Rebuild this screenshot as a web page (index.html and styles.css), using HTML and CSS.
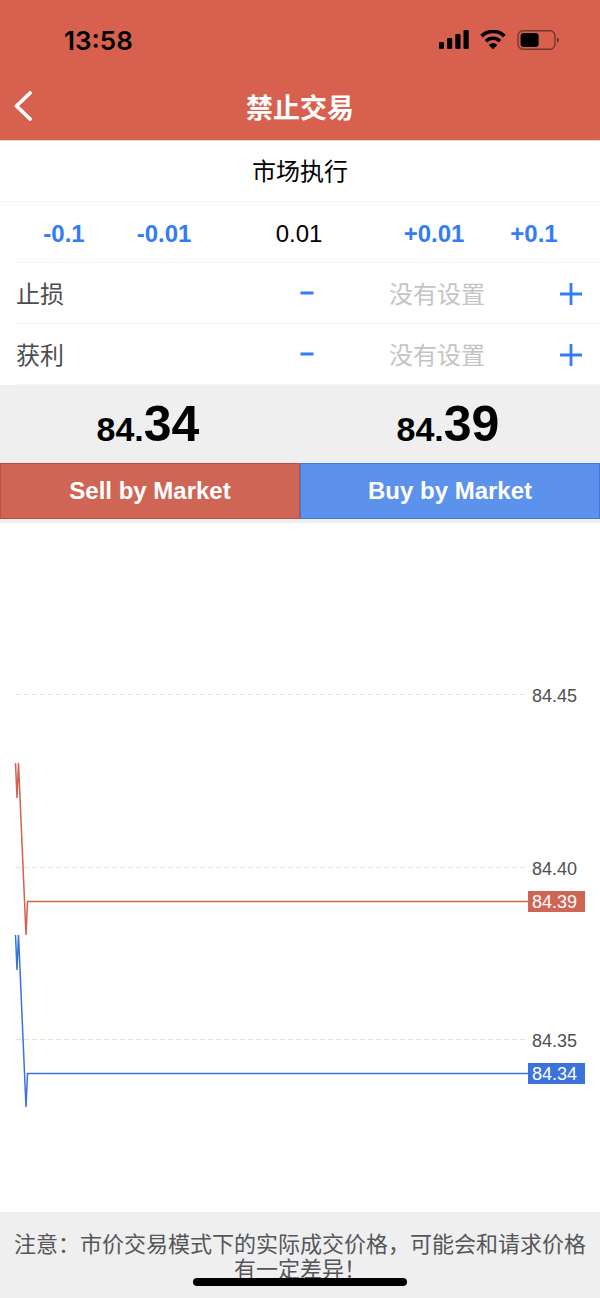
FILE: index.html
```html
<!DOCTYPE html>
<html lang="zh-CN">
<head>
  <meta charset="UTF-8">
  <meta name="viewport" content="width=device-width, initial-scale=1.0">
  <title>禁止交易</title>
  <link rel="stylesheet" href="styles.css">
</head>
<body>

  <header class="header">
    <div class="status">
      <span class="time">13:58</span>
      <div class="status-icons">
        <svg width="30" height="20" viewBox="0 0 30 20">
          <rect x="0" y="12" width="5" height="7" rx="1.3" />
          <rect x="8" y="8" width="5.2" height="11" rx="1.3" />
          <rect x="16.3" y="4" width="5.2" height="15" rx="1.3" />
          <rect x="24.5" y="0" width="5.2" height="19" rx="1.3" />
        </svg>
        <svg width="26" height="20" viewBox="0 0 26 20">
          <path d="M1.6 6.2 A16 16 0 0 1 24.4 6.2" fill="none" stroke="#000" stroke-width="3.8" />
          <path d="M6 11.2 A9.8 9.8 0 0 1 20 11.2" fill="none" stroke="#000" stroke-width="3.6" />
          <path d="M13 19.2 L8.6 14.9 Q13 11.3 17.4 14.9 Z" />
        </svg>
        <svg width="43" height="20" viewBox="0 0 43 20">
          <rect x="1" y="0.8" width="37" height="18.4" rx="5" fill="none" stroke="#000" stroke-opacity="0.45" stroke-width="1.4" />
          <rect x="3.6" y="3" width="18" height="14" rx="3" />
          <path d="M40 7.5 Q42 8 42 10 Q42 12 40 12.5 Z" fill-opacity="0.5" />
        </svg>
      </div>
    </div>
    <nav class="nav">
      <button class="back" type="button" aria-label="返回">
        <svg width="18" height="30" viewBox="0 0 18 30">
          <path d="M16 2 L2.5 15 L16 28" fill="none" stroke="#fff" stroke-width="3.8" stroke-linecap="round" stroke-linejoin="round" />
        </svg>
      </button>
      <h1 class="title">禁止交易</h1>
    </nav>
  </header>

  <main class="main">
    <div class="row mode">市场执行</div>

    <div class="row volume">
      <button class="step" type="button">-0.1</button>
      <button class="step" type="button">-0.01</button>
      <input class="field amount" type="text" value="0.01" aria-label="交易量">
      <button class="step" type="button">+0.01</button>
      <button class="step" type="button">+0.1</button>
    </div>

    <div class="row level">
      <label for="stopLoss">止损</label>
      <button class="icon-btn" type="button" aria-label="减少止损">
        <svg width="24" height="24" viewBox="0 0 24 24"><path d="M5.5 11 H18.5" stroke="#347cf6" stroke-width="3" /></svg>
      </button>
      <input class="field" type="text" id="stopLoss" placeholder="没有设置">
      <button class="icon-btn" type="button" aria-label="增加止损">
        <svg width="24" height="24" viewBox="0 0 24 24"><path d="M1 12 H23 M12 1 V23" stroke="#347cf6" stroke-width="2.8" /></svg>
      </button>
    </div>

    <div class="row level">
      <label for="takeProfit">获利</label>
      <button class="icon-btn" type="button" aria-label="减少获利">
        <svg width="24" height="24" viewBox="0 0 24 24"><path d="M5.5 11 H18.5" stroke="#347cf6" stroke-width="3" /></svg>
      </button>
      <input class="field" type="text" id="takeProfit" placeholder="没有设置">
      <button class="icon-btn" type="button" aria-label="增加获利">
        <svg width="24" height="24" viewBox="0 0 24 24"><path d="M1 12 H23 M12 1 V23" stroke="#347cf6" stroke-width="2.8" /></svg>
      </button>
    </div>

    <section class="deal">
      <div class="price">84.<span class="pips">34</span></div>
      <div class="price">84.<span class="pips">39</span></div>
      <button class="order sell" type="button">Sell by Market</button>
      <button class="order buy" type="button">Buy by Market</button>
    </section>

    <!-- tick chart: ask in red, bid in blue -->
    <svg class="chart" viewBox="0 0 600 689">
      <g class="grid">
        <path d="M16 171.5 H528" />
        <path d="M16 344.5 H528" />
        <path d="M16 516.5 H528" />
      </g>
      <polyline class="line ask" points="15.5,240 17,275 18.5,240 26,412 27.5,378.5 528,378.5" />
      <polyline class="line bid" points="15.5,412 17,447 18.5,412 26,584 27.5,550.5 528,550.5" />
      <rect class="tag-ask" x="528" y="368" width="57" height="21" />
      <rect class="tag-bid" x="528" y="540" width="57" height="21" />
      <g class="scale">
        <text x="532" y="179">84.45</text>
        <text x="532" y="352">84.40</text>
        <text x="532" y="524">84.35</text>
        <text class="now" x="532" y="385">84.39</text>
        <text class="now" x="532" y="557">84.34</text>
      </g>
    </svg>
  </main>

  <footer class="notice">
    注意：市价交易模式下的实际成交价格，可能会和请求价格有一定差异！
    <div class="home-bar"></div>
  </footer>

</body>
</html>
```
FILE: styles.css
```css
* { box-sizing: border-box; }
body {
  margin: 0;
  min-height: 100vh;
  display: flex;
  flex-direction: column;
  background: #fff;
  color: #000;
  font-family: "Liberation Sans", "Noto Sans CJK SC", sans-serif;
  font-size: 24px;
}
button { padding: 0; border: none; background: none; font: inherit; cursor: pointer; }
svg { display: block; }

/* header */
.header { background: #d8604e; border-bottom: 1px solid #e3d5d5; }
.status { display: flex; justify-content: space-between; align-items: center; height: 74px; padding: 6px 40px 0 64px; }
.time { font-family: Inter, sans-serif; font-size: 26px; font-weight: 600; }
.status-icons { display: flex; gap: 11px; }
.nav { display: grid; grid-template-columns: 40px 1fr 40px; align-items: center; height: 66px; padding: 0 14px 2px; }
.title { margin: 0; color: #fff; font-size: 27px; font-weight: bold; text-align: center; }

/* form rows */
.main { flex: 1; }
.row { height: 61px; border-bottom: 1px solid #f5f5f5; }
.mode { display: flex; align-items: center; justify-content: center; padding-bottom: 3px; }
.volume { display: grid; grid-template-columns: 10fr 10fr 17fr 10fr 10fr; margin-left: 14px; padding: 4px 16px 0 0; }
.step { color: #347cf6; font-weight: bold; }
.field { width: 100%; min-width: 0; padding: 0; border: none; background: none; font: inherit; color: #000; text-align: center; }
.field::placeholder { color: #c4c4c6; opacity: 1; }
.level { display: grid; grid-template-columns: 271fr 36px 226fr 36px; align-items: center; margin-left: 16px; padding-right: 11px; color: #4d4d50; }
.level label { padding-bottom: 2px; }
.level .field { padding: 4px 4px 0 0; }
.icon-btn { display: flex; align-items: center; justify-content: center; height: 100%; padding-top: 1px; }

/* prices and order buttons */
.deal { display: grid; grid-template-columns: 1fr 1fr; padding-bottom: 4px; background: #efefef; }
.price { height: 78px; padding-right: 4px; font-size: 34px; font-weight: bold; line-height: 78px; text-align: center; }
.pips { font-size: 50px; }
.order { height: 56px; border: 1px solid; color: #fff; font-weight: bold; }
.sell { background: #cf6655; border-color: #bf5040; }
.buy { background: #5c91ec; border-color: #4478d8; }

/* chart */
.chart { width: 100%; height: auto; }
.grid path { stroke: #e2e2e2; stroke-width: 1; stroke-dasharray: 5 3; }
.line { fill: none; stroke-width: 1.5; }
.ask { stroke: #d4604f; }
.bid { stroke: #3c72dc; }
.tag-ask { fill: #cf6655; }
.tag-bid { fill: #3c72dc; }
.scale { font-size: 18px; fill: #505054; }
.scale .now { fill: #fff; }

/* footer */
.notice { position: relative; padding: 20px 12px 16px; background: #efefef; color: #55555a; font-size: 22px; line-height: 25px; text-align: center; }
.home-bar { position: absolute; left: 50%; bottom: 12px; width: 214px; height: 8px; margin-left: -107px; border-radius: 4px; background: #000; }
```
